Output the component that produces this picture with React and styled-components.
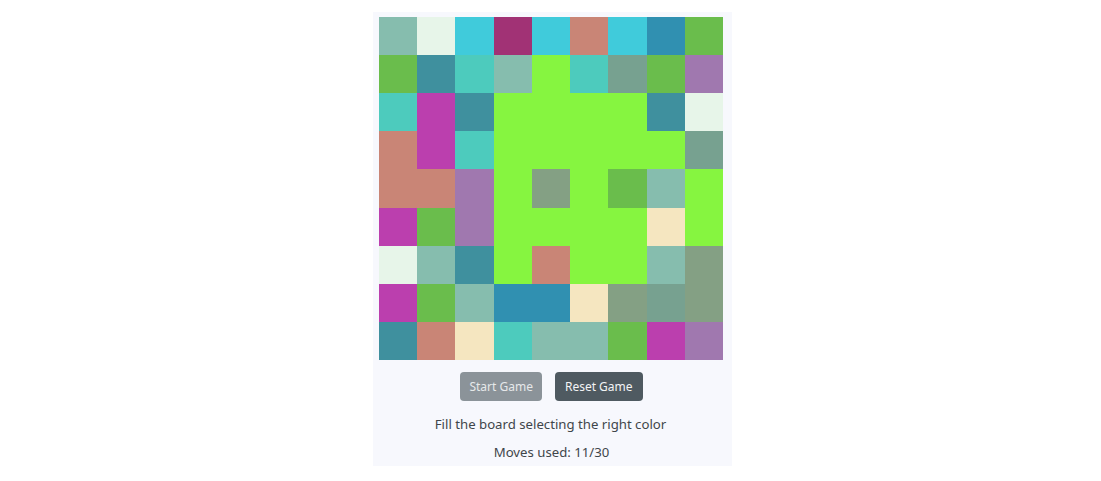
import React from "react";
import styled, { createGlobalStyle } from "styled-components";

const GlobalStyle = createGlobalStyle`
  html, body { margin: 0; padding: 0; background: #ffffff; }
  body { font-family: "Noto Sans", "Open Sans", sans-serif; }
`;

const Page = styled.div`
  display: flex;
  justify-content: center;
  padding: 12px 0 0 4px;
`;

const Panel = styled.section`
  width: 359px;
  box-sizing: border-box;
  padding: 5px 9px 0 6px;
  background: #f7f8fd;
  display: flex;
  flex-direction: column;
  align-items: center;
  height: 454px;
`;

const Board = styled.div`
  display: grid;
  grid-template-columns: repeat(9, 1fr);
  grid-template-rows: repeat(9, 1fr);
  width: 344px;
  height: 343px;
  align-self: flex-start;
`;

const Cell = styled.div`
  background: ${(p) => p.$color};
`;

const Controls = styled.div`
  display: flex;
  gap: 13px;
  margin-top: 12px;
  margin-left: 1px;
`;

const Button = styled.button`
  font-family: inherit;
  font-size: 12px;
  height: 29px;
  padding: 0 ${(p) => (p.$disabled ? 9 : 10)}px;
  border: none;
  border-radius: 4px;
  background: ${(p) => (p.$disabled ? "#8b9399" : "#4f5a61")};
  color: ${(p) => (p.$disabled ? "#e6e8ea" : "#f3f4f5")};
  cursor: pointer;
`;

const Info = styled.p`
  margin: ${(p) => p.$mt}px 0 0 ${(p) => p.$ml}px;
  font-size: 13.2px;
  line-height: 20px;
  color: #3f464b;
`;

const A = "#86bdae"; // gray teal
const P = "#e7f5e9"; // pale
const C = "#40cbdb"; // cyan
const M = "#a13275"; // plum
const S = "#c98576"; // salmon
const B = "#3090b1"; // blue
const G = "#6abd4c"; // green
const D = "#3f909e"; // dark teal
const T = "#4dcbbd"; // turquoise
const L = "#86f540"; // lime
const Y = "#77a190"; // gray green
const V = "#a078af"; // lavender
const K = "#bb3fae"; // magenta
const E = "#84a084"; // sage
const Q = "#f5e6c0"; // cream

const grid = [
  [A, P, C, M, C, S, C, B, G],
  [G, D, T, A, L, T, Y, G, V],
  [T, K, D, L, L, L, L, D, P],
  [S, K, T, L, L, L, L, L, Y],
  [S, S, V, L, E, L, G, A, L],
  [K, G, V, L, L, L, L, Q, L],
  [P, A, D, L, S, L, L, A, E],
  [K, G, A, B, B, Q, E, Y, E],
  [D, S, Q, T, A, A, G, K, V],
];

export default function App() {
  return (
    <>
      <GlobalStyle />
      <Page>
        <Panel>
          <Board>
            {grid.flatMap((row, r) =>
              row.map((c, i) => <Cell key={`${r}-${i}`} $color={c} />)
            )}
          </Board>
          <Controls>
            <Button $disabled>Start Game</Button>
            <Button>Reset Game</Button>
          </Controls>
          <Info $mt={13} $ml={-1}>Fill the board selecting the right color</Info>
          <Info $mt={8} $ml={1}>Moves used: 11/30</Info>
        </Panel>
      </Page>
    </>
  );
}
